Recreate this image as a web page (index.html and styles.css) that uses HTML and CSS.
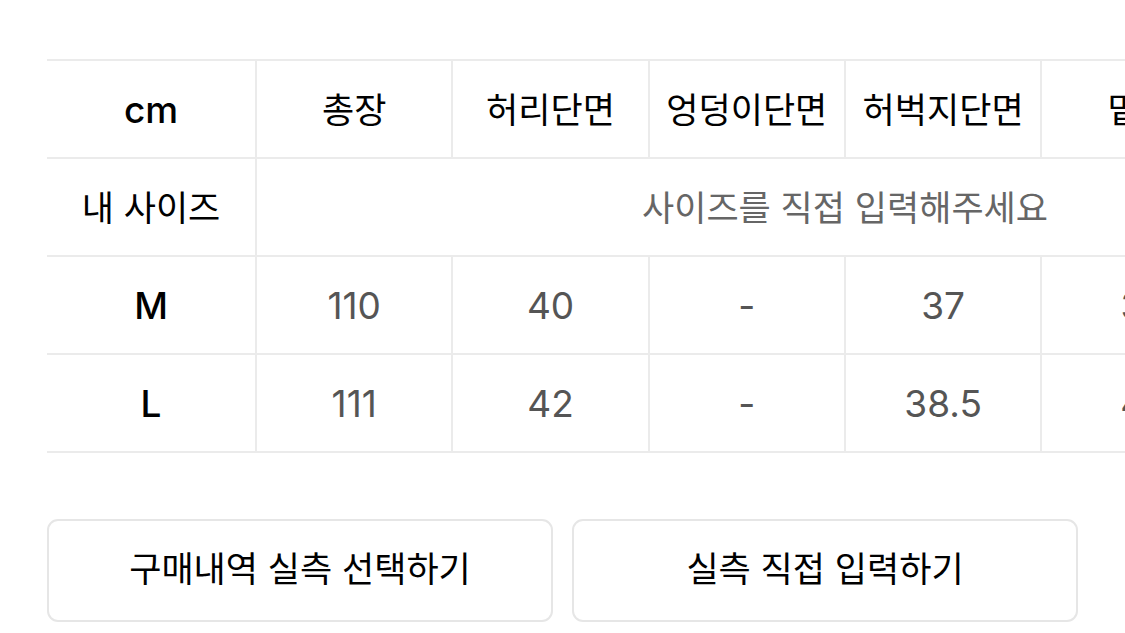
FILE: index.html
```html
<!DOCTYPE html>
<html lang="ko">
<head>
<meta charset="utf-8">
<link rel="stylesheet" href="styles.css">
</head>
<body>
<div class="page">
  <div class="table-wrap">
    <table class="size-table">
      <colgroup>
        <col class="c-first">
        <col class="c-data"><col class="c-data"><col class="c-data"><col class="c-data"><col class="c-data"><col class="c-data">
      </colgroup>
      <tr class="head">
        <th class="lat">cm</th><th>총장</th><th>허리단면</th><th>엉덩이단면</th><th>허벅지단면</th><th>밑위</th><th>밑단단면</th>
      </tr>
      <tr class="mine">
        <th>내 사이즈</th>
        <td colspan="6" class="hint">사이즈를 직접 입력해주세요</td>
      </tr>
      <tr>
        <th class="lat">M</th><td class="lat">110</td><td class="lat">40</td><td class="lat">-</td><td class="lat">37</td><td class="lat">31</td><td class="lat">21</td>
      </tr>
      <tr class="last">
        <th class="lat">L</th><td class="lat">111</td><td class="lat">42</td><td class="lat">-</td><td class="lat">38.5</td><td class="lat">41</td><td class="lat">22</td>
      </tr>
    </table>
  </div>
  <div class="actions">
    <button class="btn" type="button">구매내역 실측 선택하기</button>
    <button class="btn" type="button">실측 직접 입력하기</button>
  </div>
</div>
</body>
</html>
```

FILE: styles.css
```css
html, body {
  margin: 0;
  padding: 0;
  background: #ffffff;
}
body {
  font-family: "Noto Sans CJK KR", sans-serif;
  color: #000;
}
.page {
  padding: 59px 0 0 47px;
}
.table-wrap {
  overflow: hidden;
  width: 1078px;
}
.size-table {
  border-collapse: separate;
  border-spacing: 0;
  table-layout: fixed;
  width: 1386px;
}
.c-first { width: 208px; }
.c-data { width: 196.3px; }
.size-table th,
.size-table td {
  height: 93px;
  padding: 0 0 3px;
  border-top: 2px solid #ebebeb;
  border-left: 2px solid #ebebeb;
  text-align: center;
  vertical-align: middle;
  font-size: 35px;
  line-height: 1;
  white-space: nowrap;
}
.size-table th {
  font-weight: 400;
  color: #000;
}
.size-table th:first-child {
  border-left: none;
}
.size-table td {
  font-weight: 400;
  color: #555;
}
.size-table .lat {
  font-family: "Inter", "Noto Sans CJK KR", sans-serif;
  font-size: 37px;
  padding: 2px 0 1px;
}
.size-table th.lat {
  font-weight: 500;
}
.size-table .hint {
  color: #666;
}
.size-table .last th,
.size-table .last td {
  border-bottom: 2px solid #ebebeb;
}
.actions {
  display: flex;
  gap: 19px;
  margin-top: 66px;
  width: 1031px;
}
.btn {
  flex: 1;
  height: 103px;
  background: #fff;
  border: 2px solid #e6e6e6;
  border-radius: 11px;
  font-family: "Noto Sans CJK KR", sans-serif;
  font-size: 35px;
  font-weight: 400;
  color: #000;
  padding: 0 0 8px;
}
```
